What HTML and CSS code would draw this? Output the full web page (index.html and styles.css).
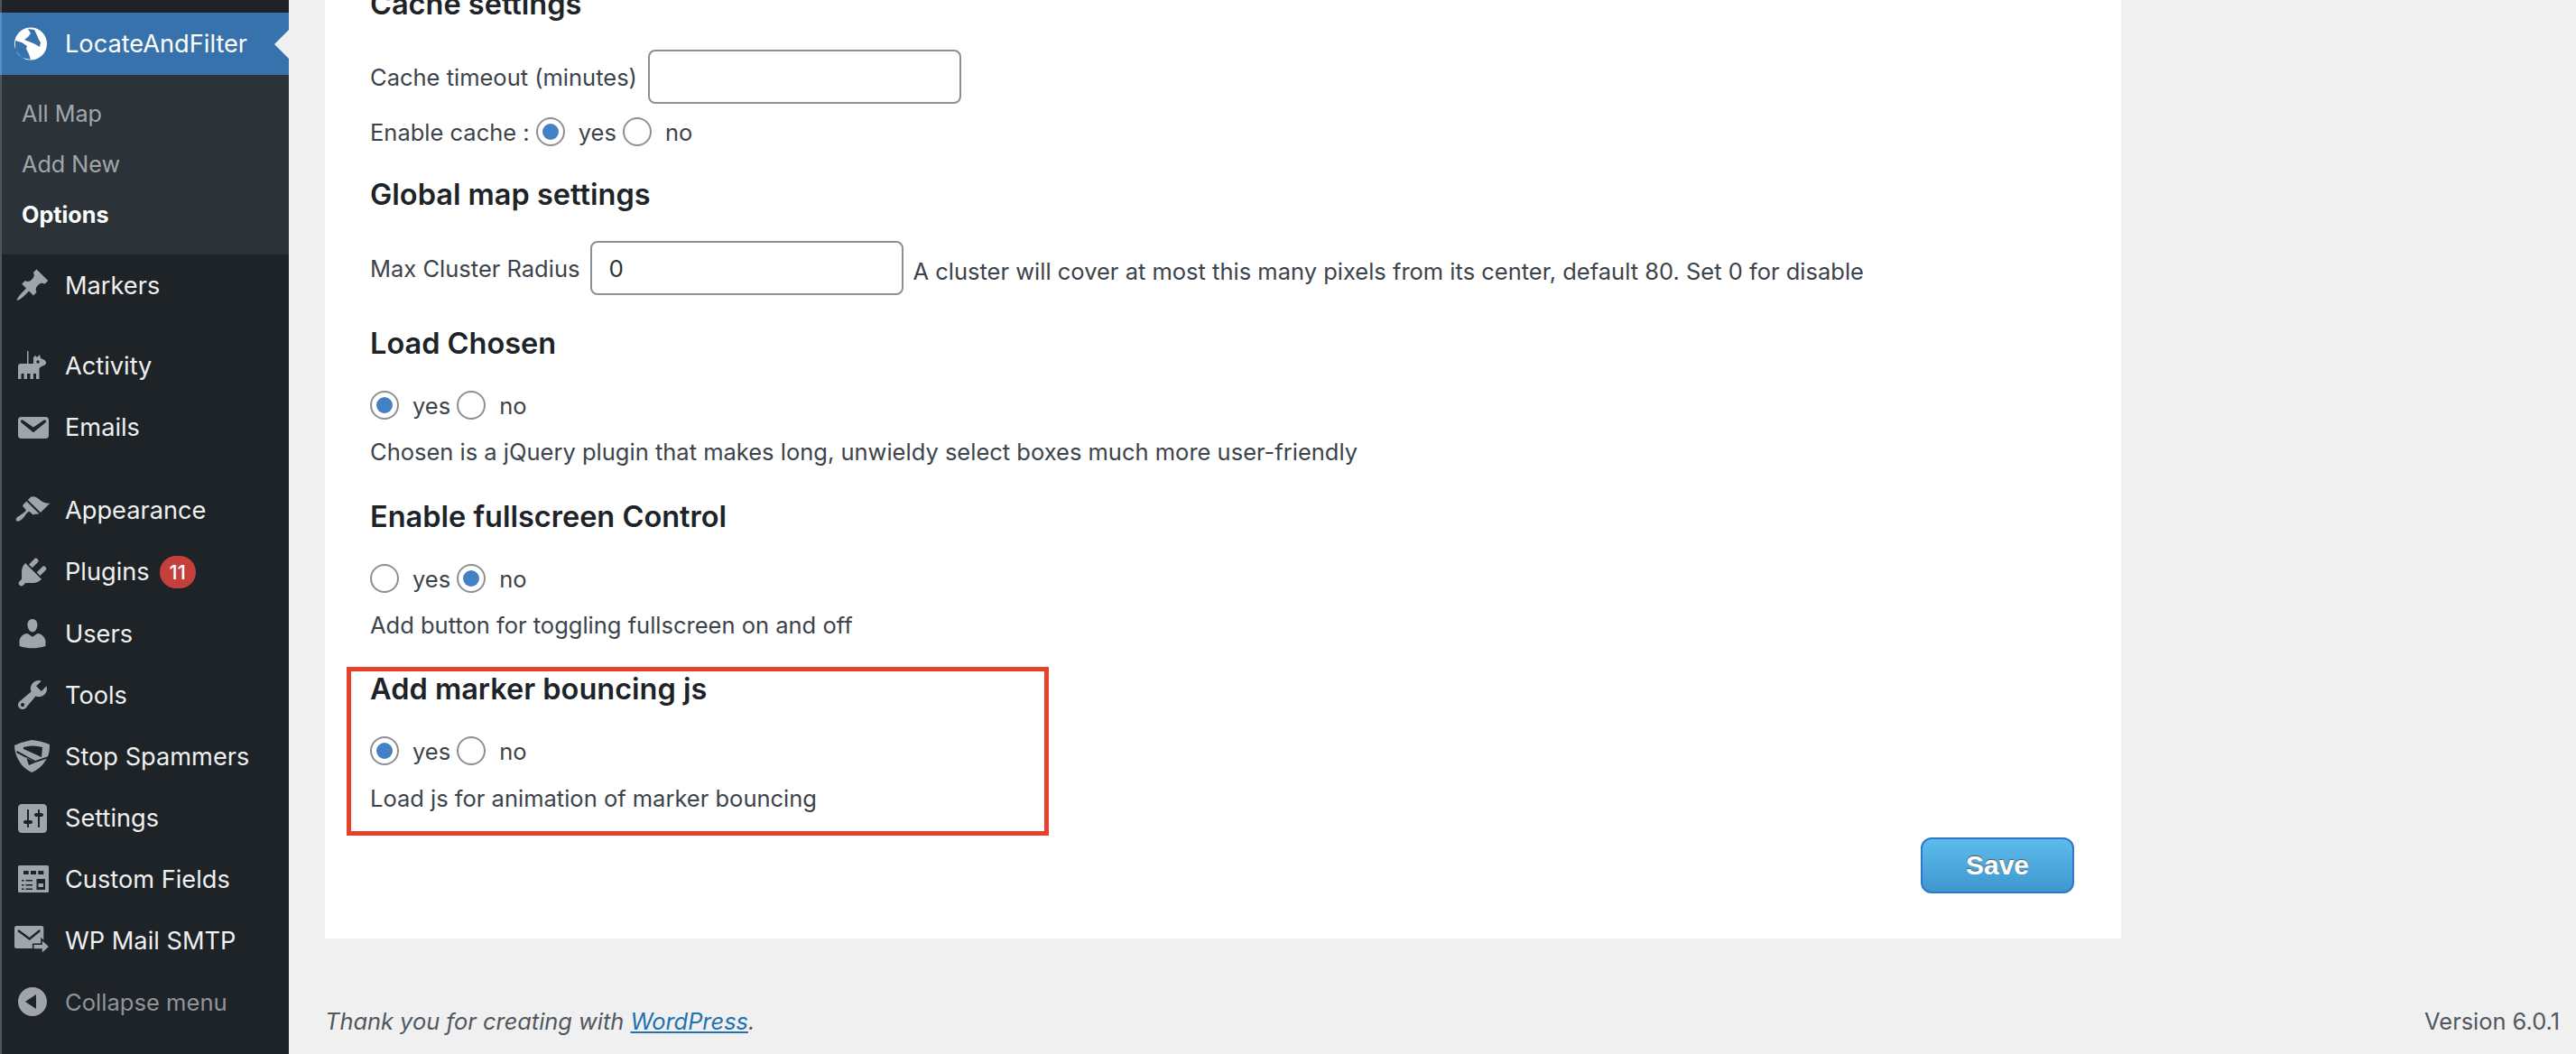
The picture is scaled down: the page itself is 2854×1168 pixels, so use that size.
FILE: index.html
```html
<!DOCTYPE html>
<html lang="en">
<head>
  <meta charset="UTF-8" />
  <title>LocateAndFilter Options</title>
  <link rel="stylesheet" href="styles.css">
</head>
<body>
  <div class="layout">
    <nav class="sidebar">
      <a class="menu-item active">
        <svg class="ico" viewBox="6 5 40 40"><circle cx="24" cy="24.500" r="18" fill="#fff"/><path fill="#3872ac" d="M7 21l7 2 6 4-1 3 3 6 2 6-10-2-7-8zM21 8l3 5-3 4-4 3 5 2 7 3 5 3 1-5-2-3-2-5-3-6z"/></svg>
        <span>LocateAndFilter</span>
      </a>
      <div class="submenu">
        <a>All Map</a>
        <a>Add New</a>
        <a class="current">Options</a>
      </div>
      <a class="menu-item">
        <svg class="ico" viewBox="0 0 20 20"><path d="M10.440 3.020l1.820-1.820 6.360 6.350-1.830 1.820c-1.050-.68-2.480-.57-3.410.36l-.75.75c-.92.93-1.040 2.350-.35 3.410l-1.830 1.820-2.410-2.410-2.800 2.790c-.42.42-3.380 2.710-3.800 2.290s1.860-3.390 2.280-3.810l2.790-2.790L4.100 9.360l1.830-1.820c1.050.69 2.480.57 3.400-.36l.75-.75c.93-.92 1.050-2.350.36-3.410z"/></svg>
        <span>Markers</span>
      </a>
      <div class="menu-sep"></div>
      <a class="menu-item">
        <svg class="ico" viewBox="6 5 40 40"><path d="M10 25q0-3 3-3h7V8h1.500v14H27v-7l2-2 2 2 3-3 1 4q7 2 6 6-1 2-5 3l-2.500 2v12H30v-6h-3v6h-3.500v-6H20v6h-3.500v-6h-3v6H10z"/><circle cx="32" cy="20" r="1.700" fill="#1d2327"/></svg>
        <span>Activity</span>
      </a>
      <a class="menu-item">
        <svg class="ico" viewBox="0 0 20 20"><path fill-rule="evenodd" d="M3.870 4h13.250C18.370 4 19 4.590 19 5.790v8.420c0 1.190-.63 1.790-1.880 1.790H3.870c-1.250 0-1.880-.6-1.880-1.790V5.790C1.990 4.590 2.620 4 3.870 4zm6.620 8.600l6.740-5.530c.24-.2.43-.66.13-1.070-.29-.41-.82-.42-1.170-.17L10.490 9.690 4.800 5.830c-.35-.25-.88-.24-1.170.17-.3.41-.11.870.13 1.070z"/></svg>
        <span>Emails</span>
      </a>
      <div class="menu-sep sep-wide"></div>
      <a class="menu-item">
        <svg class="ico" viewBox="0 0 20 20"><path d="M14.480 11.060L7.410 3.990l1.500-1.500c.5-.56 2.300-.47 3.510.32 1.210.8 1.430 1.280 2.910 2.100 1.180.64 2.450 1.260 4.450.85zm-.71.71L6.700 4.700 4.930 6.470c-.39.39-.39 1.020 0 1.410l1.060 1.060c.39.39.39 1.030 0 1.420-.6.6-1.430 1.110-2.210 1.690-.35.26-.7.53-1.010.84C1.430 13.230.4 14.850 1.150 15.600c.75.75 2.370-.28 3.700-1.620.31-.31.58-.66.84-1.010.58-.78 1.090-1.610 1.690-2.210.39-.39 1.030-.39 1.420 0l1.060 1.060c.39.39 1.020.39 1.410 0z"/></svg>
        <span>Appearance</span>
      </a>
      <a class="menu-item">
        <svg class="ico" viewBox="0 0 20 20"><path d="M13.110 4.360L9.870 7.600 8 5.730l3.240-3.240c.35-.34 1.050-.2 1.560.32.52.51.66 1.210.31 1.550zm-8 1.770l.91-1.120 9.010 9.010-1.190.84c-.71.71-2.630 1.160-3.820 1.160H6.140L4.900 17.260c-.59.59-1.540.59-2.120 0-.59-.58-.59-1.530 0-2.120l1.240-1.240v-3.880c0-1.130.4-3.190 1.090-3.890zm7.260 3.970l3.240-3.240c.34-.35 1.040-.21 1.550.31.52.51.66 1.210.31 1.550l-3.240 3.250z"/></svg>
        <span>Plugins</span>
        <em class="badge">11</em>
      </a>
      <a class="menu-item">
        <svg class="ico" viewBox="0 0 20 20"><path d="M10 9.250c-2.270 0-2.730-3.440-2.730-3.440C7 4.020 7.820 2 9.970 2c2.160 0 2.980 2.020 2.710 3.810 0 0-.41 3.440-2.680 3.440zm0 2.570L12.720 10c2.390 0 4.520 2.330 4.520 4.530v2.490s-3.650 1.130-7.240 1.130c-3.650 0-7.240-1.130-7.240-1.130v-2.490c0-2.250 1.940-4.480 4.470-4.480z"/></svg>
        <span>Users</span>
      </a>
      <a class="menu-item">
        <svg class="ico" viewBox="0 0 20 20"><path d="M16.680 9.770c-1.340 1.340-3.300 1.670-4.950.99l-5.410 6.520c-.99.99-2.590.99-3.580 0s-.99-2.590 0-3.570l6.520-5.420c-.68-1.650-.35-3.610.99-4.950 1.280-1.280 3.120-1.620 4.720-1.060l-2.890 2.890 2.820 2.820 2.860-2.870c.53 1.580.18 3.390-1.080 4.650zM3.810 16.210c.4.39 1.040.39 1.430 0 .4-.4.4-1.040 0-1.430-.39-.4-1.030-.4-1.430 0-.39.39-.39 1.030 0 1.430z"/></svg>
        <span>Tools</span>
      </a>
      <a class="menu-item">
        <svg class="ico" viewBox="6 5 40 40"><path d="M6 13q9-4 19-6 11 1 20 5 0 12-4 17-6 10-16 14-10-5-14-13-5-8-5-17z"/><path fill="#1d2327" d="M16 15q10-3 21 0l-1 11-20-9zM8 21l21 11 15-5v-2l-15 5L9 19zM19 26l10 6-7 3z"/></svg>
        <span>Stop Spammers</span>
      </a>
      <a class="menu-item">
        <svg class="ico" viewBox="0 0 20 20"><path d="M18 16V4c0-1.100-.9-2-2-2H4c-1.100 0-2 .9-2 2v12c0 1.100.9 2 2 2h12c1.100 0 2-.9 2-2zM8 11h1c.55 0 1 .45 1 1s-.45 1-1 1H8v1.500c0 .28-.22.5-.5.5s-.5-.22-.5-.5V13H6c-.55 0-1-.45-1-1s.45-1 1-1h1V5.500c0-.28.22-.5.5-.5s.5.22.5.5V11zm5-2h-1c-.55 0-1-.45-1-1s.45-1 1-1h1V5.500c0-.28.22-.5.5-.5s.5.22.5.5V7h1c.55 0 1 .45 1 1s-.45 1-1 1h-1v5.500c0 .28-.22.5-.5.5s-.5-.22-.5-.5V9z"/></svg>
        <span>Settings</span>
      </a>
      <a class="menu-item">
        <svg class="ico" viewBox="6 5 40 40"><rect x="10" y="9" width="34" height="30" rx="1.500"/><path fill="#1d2327" d="M16 15h5.700v4H16zM24 15h6v4h-6zM32.300 15h6v4h-6zM14 25h2.500v1.500H14zM18.500 25H26v1.500h-7.500zM14 30h2.500v1.500H14zM18.500 30H26v1.500h-7.500zM14 34.500h2.500V36H14zM18.500 34.500H26V36h-7.500zM30.500 24H40v12h-9.500zM32.500 29v4H38v-4z" fill-rule="evenodd"/></svg>
        <span>Custom Fields</span>
      </a>
      <a class="menu-item">
        <svg class="ico" viewBox="6 5 40 40"><rect x="6" y="8" width="32.300" height="25" rx="2.500"/><path fill="none" stroke="#1d2327" stroke-width="2.400" d="M10 13l12.700 9.500L34.300 13"/><path stroke="#1d2327" stroke-width="1.600" d="M26.700 28.300h9.300v-5.600l9 8.300-9 8.300V34h-9.300z"/></svg>
        <span>WP Mail SMTP</span>
      </a>
      <a class="menu-item collapse">
        <svg class="ico" viewBox="0 0 20 20"><path fill-rule="evenodd" d="M18 10c0-4.420-3.580-8-8-8s-8 3.580-8 8 3.580 8 8 8 8-3.580 8-8zm-6-4v8l-6-4z"/></svg>
        <span>Collapse menu</span>
      </a>
    </nav>

    <main class="content">
      <form class="card">
        <h2>Cache settings</h2>
        <div class="row row-input">
          <label for="cache-timeout">Cache timeout (minutes)</label>
          <input id="cache-timeout" type="text">
        </div>
        <div class="row row-cache">
          <span>Enable cache :</span>
          <input type="radio" name="cache" checked><label>yes</label>
          <input type="radio" name="cache"><label>no</label>
        </div>

        <h2 class="global">Global map settings</h2>
        <div class="row row-input row-cluster">
          <label for="cluster">Max Cluster Radius</label>
          <input id="cluster" type="text" value="0">
          <span class="hint">A cluster will cover at most this many pixels from its center, default 80. Set 0 for disable</span>
        </div>

        <section class="section">
          <h2>Load Chosen</h2>
          <div class="row row-radio">
            <input type="radio" name="chosen" checked><label>yes</label>
            <input type="radio" name="chosen"><label>no</label>
          </div>
          <p>Chosen is a jQuery plugin that makes long, unwieldy select boxes much more user-friendly</p>
        </section>

        <section class="section">
          <h2>Enable fullscreen Control</h2>
          <div class="row row-radio">
            <input type="radio" name="fullscreen"><label>yes</label>
            <input type="radio" name="fullscreen" checked><label>no</label>
          </div>
          <p>Add button for toggling fullscreen on and off</p>
        </section>

        <section class="section marked">
          <div class="red-box"></div>
          <h2>Add marker bouncing js</h2>
          <div class="row row-radio">
            <input type="radio" name="bounce" checked><label>yes</label>
            <input type="radio" name="bounce"><label>no</label>
          </div>
          <p>Load js for animation of marker bouncing</p>
        </section>

        <div class="actions"><button type="button" class="save">Save</button></div>
      </form>

      <footer class="footer">
        <span class="thanks">Thank you for creating with <a>WordPress</a>.</span>
        <span>Version 6.0.1</span>
      </footer>
    </main>
  </div>
</body>
</html>
```

FILE: styles.css
```css
html, body {margin:0; padding:0; height:100%; overflow:hidden}
body {background:#f0f0f1; color:#3c434a; font-family:Inter, "Noto Sans", sans-serif; font-size:25.5px}
.layout {display:flex; height:1168px; overflow:hidden}

/* sidebar */
.sidebar {width:318px; flex:none; background:#1d2327; border-left:2px solid #50555a; padding-top:14px; box-sizing:content-box}
.menu-item {display:flex; align-items:center; height:68.2px; margin-left:-2px; color:#f0f0f1; font-size:27.2px; position:relative}
.menu-item .ico {width:40px; height:40px; margin:0 16px 0 16px; flex:none; fill:#a0a5aa}
.menu-item.active {background:#3872ac; color:#fff; height:69px; border-left:2px solid #5a8dc0; box-sizing:border-box}
.menu-item.active .ico {margin-left:14px; fill:#fff}
.menu-item.active::after {content:""; position:absolute; right:0; top:50%; margin-top:-16px; border:16px solid transparent; border-right-color:#f0f0f1; border-left:0}
.menu-sep {height:21.5px}
.sep-wide {height:23.5px}
.submenu {background:#2c3338; padding:15px 0 16px}
.submenu a {display:block; height:56px; line-height:56px; padding-left:22px; color:#a2a6aa; font-size:25.2px}
.submenu a.current {color:#fff; font-weight:700}
.badge {margin-left:11px; width:40px; height:36px; border-radius:18px; background:#c5403d; color:#fff; font-size:22px; font-style:normal; font-weight:500; line-height:36px; text-align:center}
.collapse {color:#90949a; font-size:25.6px; height:66px}
.collapse .ico {fill:#a0a5aa}

/* main */
.content {flex:1; min-width:0; padding-left:40px; padding-right:16px}
.card {width:1890px; background:#fff; margin-top:-17px; padding:0 50px 50px; height:1007px; box-sizing:content-box}
h2 {margin:0; color:#1d2327; font-size:32.5px; font-weight:600; line-height:44px}
p {margin:18px 0 0; line-height:36px}
.row {display:flex; align-items:center}
.row-input {margin-top:28px; gap:12px}
.row-input input[type=text] {width:347px; height:60px}
.row-cache {margin-top:15px; height:32px}
.global {margin-top:32px}
.row-cluster {margin-top:29px; gap:0}
.row-cluster input[type=text] {margin:0 10px 0 12px}
.hint {position:relative; top:3px}
input[type=text] {box-sizing:border-box; padding:0 18px; border:2px solid #8c8f94; border-radius:8px; background:#fff; color:#2c3338; font:26px Inter, sans-serif}
input[type=radio] {appearance:none; -webkit-appearance:none; box-sizing:border-box; width:32px; height:32px; margin:0; flex:none; border:2px solid #8c8f94; border-radius:50%; background:#fff; display:flex; align-items:center; justify-content:center}
input[type=radio]:checked::before {content:""; width:18px; height:18px; border-radius:50%; background:#4480c4}
input[type=radio] + label {margin:0 7px 0 15px}
.row-cache span {margin-right:7px}
.section {margin-top:32px}
.row-radio {margin-top:30px; height:32px}
.marked {position:relative; margin-top:31px}
.marked p {margin-top:19px}
.red-box {position:absolute; left:-26px; top:-3px; width:778px; height:187px; box-sizing:border-box; border:5px solid #e8402a}
.actions {display:flex; justify-content:flex-end; margin-top:25px; padding-right:2px}
.save {width:170px; height:62px; border:2px solid #2f78c8; border-radius:12px; background:linear-gradient(#5cbcec, #3f97cf); color:#fff; font:bold 30px "Liberation Sans", Arial, sans-serif; text-shadow:0 -1px 1px #555}

/* footer */
.footer {display:flex; justify-content:space-between; margin-top:74px; line-height:36px; color:#50575e; font-size:25.4px; width:2476px}
.thanks {font-style:italic}
.thanks a {color:#2271b1; text-decoration:underline}
```
